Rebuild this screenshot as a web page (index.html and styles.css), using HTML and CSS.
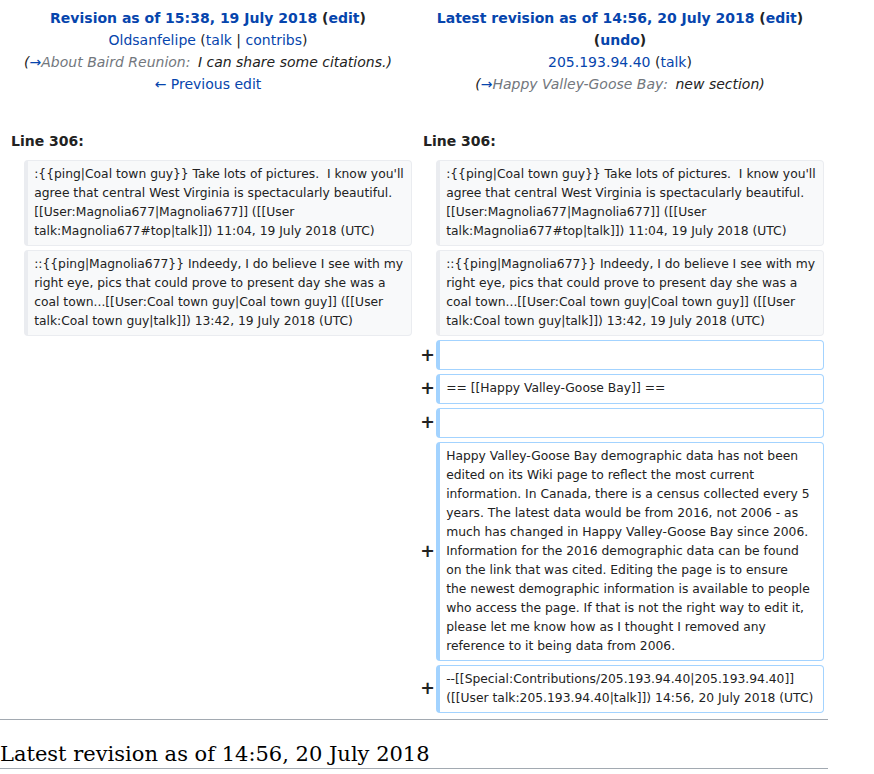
FILE: index.html
```html
<!DOCTYPE html>
<html lang="en">
<head>
<meta charset="utf-8">
<title>Diff</title>
<link rel="stylesheet" href="styles.css">
</head>
<body>
<div class="page">
<table class="diff">
<colgroup><col class="c-marker"><col class="c-content"><col class="c-marker"><col class="c-content"></colgroup>
<tr>
<td colspan="2" class="title">
<div><strong><a href="#">Revision as of 15:38, 19 July 2018</a> (<a href="#">edit</a>)</strong></div>
<div><a href="#">Oldsanfelipe</a> (<a href="#">talk</a> | <a href="#">contribs</a>)</div>
<div class="comment">(<a href="#">→</a><span class="auto">About Baird Reunion:</span> I can share some citations.)</div>
<div><a href="#">← Previous edit</a></div>
</td>
<td colspan="2" class="title">
<div><strong><a href="#">Latest revision as of 14:56, 20 July 2018</a> (<a href="#">edit</a>) (<a href="#">undo</a>)</strong></div>
<div><a href="#">205.193.94.40</a> (<a href="#">talk</a>)</div>
<div class="comment">(<a href="#">→</a><span class="auto">Happy Valley-Goose Bay:</span> new section)</div>
</td>
</tr>
<tr>
<td colspan="2" class="lineno">Line 306:</td>
<td colspan="2" class="lineno">Line 306:</td>
</tr>
<tr>
<td class="marker"></td><td class="ctx">:{{ping|Coal town guy}} Take lots of pictures.  I know you'll agree that central West Virginia is spectacularly beautiful. [[User:Magnolia677|Magnolia677]] ([[User talk:Magnolia677#top|talk]]) 11:04, 19 July 2018 (UTC)</td>
<td class="marker"></td><td class="ctx">:{{ping|Coal town guy}} Take lots of pictures.  I know you'll agree that central West Virginia is spectacularly beautiful. [[User:Magnolia677|Magnolia677]] ([[User talk:Magnolia677#top|talk]]) 11:04, 19 July 2018 (UTC)</td>
</tr>
<tr>
<td class="marker"></td><td class="ctx">::{{ping|Magnolia677}} Indeedy, I do believe I see with my right eye, pics that could prove to present day she was a coal town...[[User:Coal town guy|Coal town guy]] ([[User talk:Coal town guy|talk]]) 13:42, 19 July 2018 (UTC)</td>
<td class="marker"></td><td class="ctx">::{{ping|Magnolia677}} Indeedy, I do believe I see with my right eye, pics that could prove to present day she was a coal town...[[User:Coal town guy|Coal town guy]] ([[User talk:Coal town guy|talk]]) 13:42, 19 July 2018 (UTC)</td>
</tr>
<tr>
<td colspan="2" class="empty"></td>
<td class="marker">+</td><td class="added blank">&#8203;</td>
</tr>
<tr>
<td colspan="2" class="empty"></td>
<td class="marker">+</td><td class="added">== [[Happy Valley-Goose Bay]] ==</td>
</tr>
<tr>
<td colspan="2" class="empty"></td>
<td class="marker">+</td><td class="added blank">&#8203;</td>
</tr>
<tr>
<td colspan="2" class="empty"></td>
<td class="marker">+</td><td class="added">Happy Valley-Goose Bay demographic data has not been edited on its Wiki page to reflect the most current information. In Canada, there is a census collected every 5 years. The latest data would be from 2016, not 2006 - as much has changed in Happy Valley-Goose Bay since 2006. Information for the 2016 demographic data can be found on the link that was cited. Editing the page is to ensure<br>the newest demographic information is available to people who access the page. If that is not the right way to edit it, please let me know how as I thought I removed any reference to it being data from 2006.</td>
</tr>
<tr>
<td colspan="2" class="empty"></td>
<td class="marker">+</td><td class="added">--[[Special:Contributions/205.193.94.40|205.193.94.40]] ([[User talk:205.193.94.40|talk]]) 14:56, 20 July 2018 (UTC)</td>
</tr>
</table>
<div class="rule"></div>
<h2 class="rev-heading">Latest revision as of 14:56, 20 July 2018</h2>
</div>
</body>
</html>
```

FILE: styles.css
```css
html, body {
  margin: 0;
  padding: 0;
  background: #fff;
}
body {
  font-family: "DejaVu Sans", sans-serif;
  font-size: 14px;
  color: #222;
}
.page {
  width: 828px;
}
a {
  color: #0645ad;
  text-decoration: none;
}
table.diff {
  width: 100%;
  border-collapse: separate;
  border-spacing: 4px;
  table-layout: fixed;
  margin: 0;
}
col.c-marker { width: 2%; }
col.c-content { width: 48%; }
table.diff td {
  padding: 0;
}
table.diff td.title {
  text-align: center;
  vertical-align: top;
  line-height: 22px;
  padding: 3px 7px 28px;
}
.comment {
  font-style: italic;
}
.comment .auto {
  color: #72777d;
  margin-right: 3px;
}
table.diff td.lineno {
  font-weight: bold;
  line-height: 22px;
  padding: 3px 7px 4px;
  vertical-align: top;
}
table.diff td.marker {
  text-align: right;
  font-weight: bold;
  font-size: 17.5px;
  line-height: 1.2;
  padding: 0.25em;
  vertical-align: middle;
  color: #222;
}
table.diff td.ctx,
table.diff td.added {
  font-size: 12.32px;
  line-height: 19px;
  vertical-align: top;
  white-space: pre-wrap;
  overflow-wrap: break-word;
  border-style: solid;
  border-width: 1px 1px 1px 4px;
  border-radius: 4px;
  padding: 4px 6px;
  color: #222;
}
table.diff td.ctx {
  background: #f8f9fa;
  border-color: #eaecf0;
}
table.diff td.added {
  background: #fff;
  border-color: #a3d3ff;
}
table.diff td.blank {
  padding-bottom: 5px;
}
.rule {
  border-top: 1px solid #a2a9b1;
  margin-top: 2px;
}
.rev-heading {
  font-family: "DejaVu Serif", serif;
  font-weight: normal;
  font-size: 21px;
  line-height: 27px;
  margin: 21px 0 0;
  padding: 0;
  border-bottom: 1px solid #a2a9b1;
  color: #000;
}
```
